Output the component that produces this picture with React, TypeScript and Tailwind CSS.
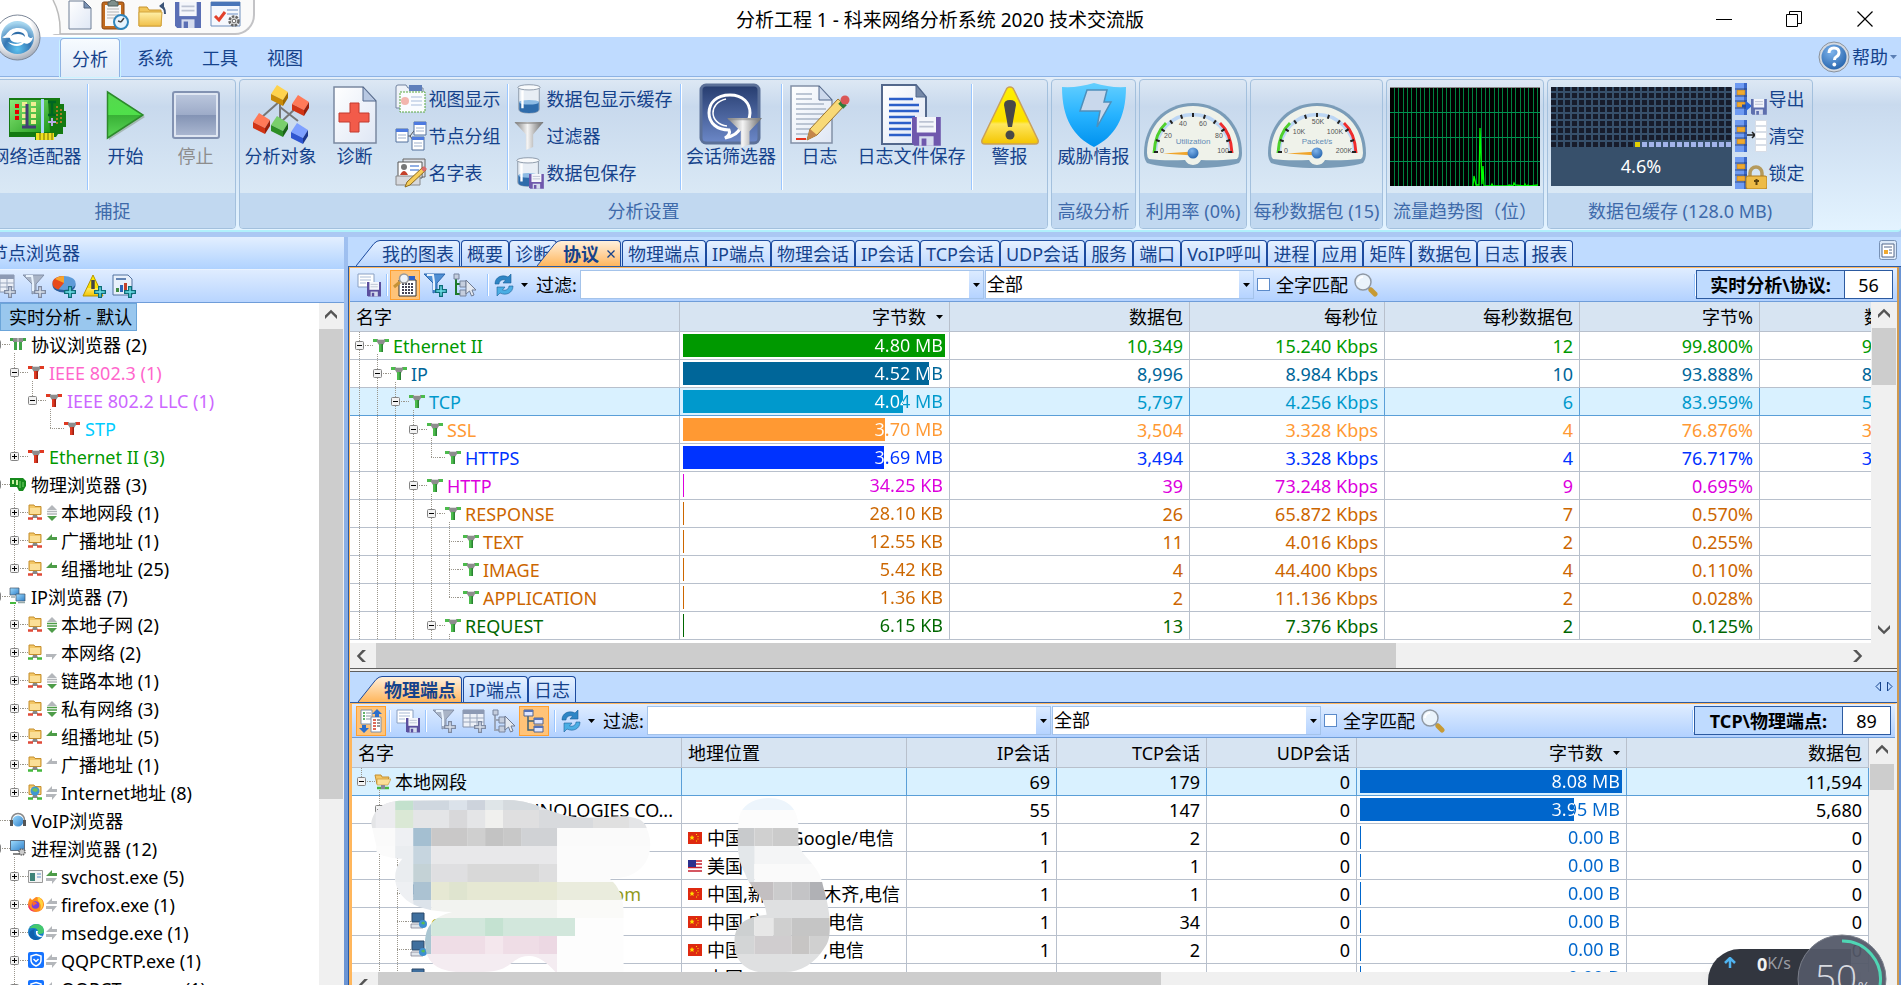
import { createContext, useContext, type CSSProperties, type ReactNode } from "react";

/* ---------- small drawing helpers ---------- */

function Chevron({ dir }: { dir: "up" | "down" | "left" | "right" }) {
  const d = {
    up: "M1 10 7 4l6 6v-3.6L7 .8 1 6.4z",
    down: "M1 4l6 6 6-6v3.6L7 13.2 1 7.6z",
    left: "M10 1 4 7l6 6H6.4L.8 7l5.6-6z",
    right: "M4 1l6 6-6 6h3.6L13.2 7 7.6 1z",
  }[dir];
  return (
    <svg width="14" height="14" viewBox="0 0 14 14" aria-hidden="true">
      <path d={d} fill="#555" />
    </svg>
  );
}

function Caret({ color = "#000" }: { color?: string }) {
  return (
    <svg width="7" height="4" viewBox="0 0 7 4" aria-hidden="true">
      <path d="M0 0h7L3.5 4z" fill={color} />
    </svg>
  );
}

function Defs() {
  return (
    <svg width="0" height="0" className="absolute" aria-hidden="true">
      <defs>
        <linearGradient id="paper" x1="0" y1="0" x2="1" y2="1">
          <stop offset="0" stopColor="#fff" />
          <stop offset="1" stopColor="#dfe7f5" />
        </linearGradient>
        <linearGradient id="funnel" x1="0" x2="1">
          <stop offset="0" stopColor="#7c7c7c" />
          <stop offset=".45" stopColor="#f4f4f4" />
          <stop offset="1" stopColor="#666" />
        </linearGradient>
        <linearGradient id="gold" x1="0" y1="0" x2="0" y2="1">
          <stop offset="0" stopColor="#fff0a8" />
          <stop offset="1" stopColor="#f0c04a" />
        </linearGradient>
        <linearGradient id="warn" x1="0" y1="0" x2="0" y2="1">
          <stop offset="0" stopColor="#fff000" />
          <stop offset=".6" stopColor="#fce000" />
          <stop offset=".65" stopColor="#ffe75e" />
          <stop offset="1" stopColor="#f3c500" />
        </linearGradient>
        <linearGradient id="stopg" x1="0" y1="0" x2="0" y2="1">
          <stop offset="0" stopColor="#b9c5dc" />
          <stop offset=".5" stopColor="#9dabc8" />
          <stop offset=".5" stopColor="#8393b4" />
          <stop offset="1" stopColor="#a9b6d0" />
        </linearGradient>
        <linearGradient id="playg" x1="0" y1="0" x2="0" y2="1">
          <stop offset="0" stopColor="#56d84e" />
          <stop offset=".5" stopColor="#4fe04a" />
          <stop offset=".5" stopColor="#38b035" />
          <stop offset="1" stopColor="#5cd858" />
        </linearGradient>
        <linearGradient id="shield" x1="0" y1="0" x2="0" y2="1">
          <stop offset="0" stopColor="#63cfff" />
          <stop offset=".5" stopColor="#27b3ff" />
          <stop offset="1" stopColor="#0091ee" />
        </linearGradient>
        <linearGradient id="navy" x1="0" y1="0" x2="0" y2="1">
          <stop offset="0" stopColor="#263c6e" />
          <stop offset="1" stopColor="#6c88c8" />
        </linearGradient>
        <linearGradient id="board" x1="0" y1="0" x2="1" y2="1">
          <stop offset="0" stopColor="#8be878" />
          <stop offset="1" stopColor="#1f9a1c" />
        </linearGradient>
        <linearGradient id="screen" x1="0" y1="0" x2="1" y2="1">
          <stop offset="0" stopColor="#9fdcff" />
          <stop offset="1" stopColor="#2f7fc8" />
        </linearGradient>
        <radialGradient id="orb" cx=".5" cy=".85" r=".8">
          <stop offset="0" stopColor="#5ec3f0" />
          <stop offset=".5" stopColor="#3577b4" />
          <stop offset="1" stopColor="#a9d8f0" />
        </radialGradient>
        <radialGradient id="rim" cx=".4" cy=".3" r=".8">
          <stop offset=".5" stopColor="#fff" />
          <stop offset="1" stopColor="#8d97a8" />
        </radialGradient>
        <radialGradient id="ball" cx=".4" cy=".3" r=".8">
          <stop offset="0" stopColor="#7fb4ec" />
          <stop offset="1" stopColor="#1f5ea8" />
        </radialGradient>
      </defs>
    </svg>
  );
}

type IconProps = { w?: number; h?: number; className?: string };

function Svg({ w = 24, h, vb, className, children }: IconProps & { vb: string; children: ReactNode }) {
  return (
    <svg width={w} height={h ?? w} viewBox={vb} className={"shrink-0 " + (className ?? "")} aria-hidden="true">
      {children}
    </svg>
  );
}

const Disk = ({ c = "#5a6fb5", x = 0, y = 0, s = 1 }: { c?: string; x?: number; y?: number; s?: number }) => (
  <g transform={`translate(${x} ${y}) scale(${s})`}>
    <path d="M0 0h24v24H2L0 22z" fill={c} />
    <path d="M4 0h16v13H4z" fill="#f4f6fb" />
    <path d="M6 4h12M6 8h12" stroke="#bcc3d3" strokeWidth="1.5" />
    <path d="M6 16h12v8H6z" fill="#d5dcee" />
    <path d="M8 18h4v6H8z" fill={c} />
  </g>
);

const Plus = ({ x, y, c = "#0d6d78" }: { x: number; y: number; c?: string }) => (
  <g transform={`translate(${x} ${y})`}>
    <path d="M4 0h4v4h4v4H8v4H4V8H0V4h4z" fill={c} />
    <path d="M5.3 1.3h1.4v4h4v1.4h-4v4H5.3v-4h-4V5.3h4z" fill={c === "#0d6d78" ? "#6fe0ea" : "#dde3ec"} />
  </g>
);

const FunnelShape = ({ fill = "url(#funnel)", t }: { fill?: string; t?: string }) => (
  <g transform={t}>
    <path d="M0 0h28L18 12v12l-7 3V12z" fill={fill} />
    <path d="M1 0h26v2H1z" fill="#888" opacity=".6" />
  </g>
);

const Beaker = () => (
  <g>
    <path d="M4 3h22v24q0 4-11 4T4 27z" fill="#e8eef5" stroke="#8b98a8" />
    <path d="M4.5 19h21v8q0 4-10.500 4T4.500 27z" fill="#2f6cab" />
    <ellipse cx="15" cy="19.500" rx="10.500" ry="2.500" fill="#8dbbe4" />
    <ellipse cx="15" cy="3.500" rx="12" ry="2.800" fill="#f8fafc" stroke="#8b98a8" />
    <path d="M8 7v19" stroke="#fff" strokeWidth="2.500" />
  </g>
);

/* ---------- toolbar icons ---------- */

const DocIcon = () => (
  <Svg w={24} h={30} vb="0 0 24 30">
    <path d="M1 1h15l7 7v21H1z" fill="url(#paper)" stroke="#6e7f96" />
    <path d="M16 1v7h7z" fill="#7b93b5" stroke="#53657f" />
  </Svg>
);
const ClipClock = () => (
  <Svg w={28} h={31} vb="0 0 28 31">
    <rect x="1" y="3" width="22" height="27" rx="2" fill="#c06a1e" stroke="#8a4510" />
    <path d="M4 6h16v21H4z" fill="#f8f8f8" />
    <path d="M6 10h12M6 13h12M6 16h12M6 19h8" stroke="#b3b3b3" />
    <path d="M7 3h2q0-2 3-2t3 2h2v4H7z" fill="#7e8f8c" stroke="#4f5f5c" />
    <circle cx="20" cy="23" r="7" fill="#e6f4ff" stroke="#2f86bd" strokeWidth="2" />
    <path d="m20 23 3-4m-3 4-3-1" stroke="#444" strokeWidth="1.500" />
  </Svg>
);
const FolderBack = () => (
  <Svg w={28} h={26} vb="0 0 28 26">
    <path d="M1 5h8l2 3h12v16H1z" fill="#f1c65a" stroke="#c8942e" />
    <path d="M1 10h23l-1 14H1z" fill="url(#gold)" stroke="#d3a43c" />
    <path d="M27 12c0-6-2-8-5-8" fill="none" stroke="#3d5578" strokeWidth="2" />
    <path d="m21 4 5-4v8z" fill="#3d5578" />
  </Svg>
);
const OptionsIcon = () => (
  <Svg w={32} h={27} vb="0 0 32 27">
    <path d="M1 1h29v24H1z" fill="#f5f8fd" stroke="#6f8fbd" />
    <path d="M1 1h29v4H1z" fill="#4a76b8" />
    <path d="m5 15 4 4 6-8" fill="none" stroke="#e2412c" strokeWidth="3" />
    <path d="M17 9h11M17 13h11" stroke="#9ab2d8" strokeWidth="1.500" />
    <circle cx="24" cy="20" r="4.500" fill="#ddd" stroke="#666" strokeWidth="2.500" strokeDasharray="2.500 1.200" />
    <circle cx="24" cy="20" r="1.800" fill="#fff" stroke="#666" />
  </Svg>
);
const SaveIcon = () => (
  <Svg w={24} vb="0 0 24 24">
    <path d="M1 1h16v13H1z" fill="#fff" stroke="#8aa0c2" />
    <path d="M3 4h11M3 7h11M3 10h6" stroke="#a9bbd6" />
    <Disk c="#5b4f9e" x={10} y={9} s={0.6} />
  </Svg>
);
const CalcSearch = () => (
  <Svg w={24} vb="0 0 24 24">
    <path d="M6 7h17v16H6z" fill="#fff" stroke="#333" />
    <path d="M13 3h9v4h-9z" fill="#2f63c8" />
    <path d="M9 11h12M9 14h12M9 17h12M9 20h12" stroke="#445" strokeWidth="1.800" strokeDasharray="2 1" />
    <path d="m7 9-6 5" stroke="#c79235" strokeWidth="3" />
    <circle cx="11" cy="5.500" r="4.500" fill="#edf3fa" stroke="#9a9a9a" strokeWidth="1.500" />
  </Svg>
);
const FunnelPlus = ({ off = false }: { off?: boolean }) => (
  <Svg w={24} vb="0 0 24 24">
    <path d="M1 1h21l-8 9v8l-4 2V10z" fill={off ? "#a9b4c6" : "#4f8fd4"} stroke={off ? "#8390a8" : "#2d68ae"} />
    <path d="M4 2h6l1 7v8" fill="none" stroke="#e8f2fc" strokeWidth="2" />
    <Plus x={12} y={12} c={off ? "#7f8ba3" : "#0d6d78"} />
  </Svg>
);
const TreeCursor = ({ off = false }: { off?: boolean }) => (
  <Svg w={24} vb="0 0 24 24">
    <path d="M3 4v17h5M3 11h5" fill="none" stroke={off ? "#9aa5b8" : "#1d7a2a"} strokeWidth="2" />
    <path d="M1 1h5v5H1zM7 8h6v6H7zM7 17h6v6H7z" fill="#c5cede" stroke="#78859e" />
    <path d="M13 7v14l3.500-3 2 5 2.500-1-2-5h4z" fill="#e4e9f1" stroke="#6f7b92" />
  </Svg>
);
const TablePlus = ({ off = true }: { off?: boolean }) => (
  <Svg w={24} vb="0 0 24 24">
    <path d="M1 1h21v17H1z" fill="#edf1f8" stroke="#8592ab" />
    <path d="M1 1h21v4H1z" fill="#8d9ab4" />
    <path d="M1 9h21M1 13h21M8 5v13M15 5v13" stroke="#9aa7bd" />
    <Plus x={12} y={12} c={off ? "#7f8ba3" : "#0d6d78"} />
  </Svg>
);
const TreeBoxes = () => (
  <Svg w={22} h={24} vb="0 0 22 24">
    <path d="M5 7v14h6M5 12h6" fill="none" stroke="#3f6277" strokeWidth="1.500" />
    <path d="M1 1h9v6H1zM11 9h9v6h-9zM11 17h9v6h-9z" fill="#dfe6ff" stroke="#52658c" />
    <path d="M1 1h9v2H1zM11 9h9v2h-9zM11 17h9v2h-9z" fill="#5673b8" />
  </Svg>
);
const LinkDoc = () => (
  <Svg w={24} vb="0 0 24 24">
    <path d="M2 1h11v14H2z" fill="#fff" stroke="#7d8fa8" />
    <path d="M4 4h2M4 7h2M4 10h2" stroke="#2f9a3b" strokeWidth="1.500" />
    <path d="M7 4h5M7 7h5M7 10h5" stroke="#8b97a8" strokeWidth="1.200" />
    <path d="M12 8h10v15H12z" fill="#fff" stroke="#7d8fa8" />
    <path d="M14 11h3M14 14h3M14 17h3M14 20h3" stroke="#d23b25" strokeWidth="1.500" />
    <path d="M18 11h3M18 14h3M18 17h3" stroke="#333" />
    <path d="M18 0l5 5h-3v3h-4V5h-3zM5 24l-5-5h3v-3h4v3h3z" fill="#2d6fcb" />
  </Svg>
);
const Refresh = () => (
  <Svg w={20} h={22} vb="0 0 20 22">
    <path d="M1 10C1 3 8 0 14 3l3-3v9H9l2.500-3C8 5 5 7 5 10z" fill="#2e86c6" stroke="#1b5f98" strokeWidth=".6" />
    <path d="M19 12c0 7-7 10-13 7l-3 3v-9h8l-2.500 3c3.500 1 6.500-1 6.500-4z" fill="#4aaee4" stroke="#1b5f98" strokeWidth=".6" />
  </Svg>
);
const Magnifier = () => (
  <Svg w={24} vb="0 0 24 24">
    <path d="m14 14 4 4" stroke="#8f98a3" strokeWidth="3" />
    <path d="m17 17 4 4" stroke="#c79a34" strokeWidth="5" strokeLinecap="round" />
    <circle cx="9" cy="9" r="8" fill="#eaf3fb" stroke="#8f98a3" strokeWidth="1.500" />
    <path d="M4 9a5 5 0 0 1 5-5" fill="none" stroke="#fff" strokeWidth="2" />
  </Svg>
);
const PiePlus = () => (
  <Svg w={24} vb="0 0 24 24">
    <ellipse cx="12" cy="11" rx="11.500" ry="7.500" fill="#2a5f9e" />
    <ellipse cx="12" cy="9" rx="11.500" ry="7" fill="#5e9bd8" />
    <path d="M12 9V2C5 2 .5 5 .5 9s3 6 6 6.500z" fill="#e84a1c" />
    <path d="M12 9V2c-4 0-7 1-9 3z" fill="#f7a32b" />
    <Plus x={12} y={12} />
  </Svg>
);
const WarnPlus = () => (
  <Svg w={24} vb="0 0 24 24">
    <path d="M11 1 1 22h20z" fill="url(#warn)" stroke="#b79300" strokeLinejoin="round" />
    <path d="M11 6v9" stroke="#444" strokeWidth="3.500" />
    <Plus x={12} y={12} />
  </Svg>
);
const ReportPlus = () => (
  <Svg w={24} vb="0 0 24 24">
    <path d="M1 1h15l4 4v16H1z" fill="#e8f0fb" stroke="#53729e" />
    <path d="M4 5h10" stroke="#6384b3" strokeWidth="2" />
    <path d="M4 14h3v4H4z" fill="#3f8a45" />
    <path d="M8 11h3v7H8z" fill="#2d65b8" />
    <path d="M12 9h3v9h-3z" fill="#c5412a" />
    <Plus x={12} y={12} />
  </Svg>
);

/* ---------- ribbon icons ---------- */

const Adapter = () => (
  <Svg w={58} h={44} vb="0 0 58 44" className="mt-2">
    <path d="M1 1h51v6h4v7h2v16h-3v7h-5l-2 3H30v3H27v-3H1z" fill="#147a12" />
    <path d="M2 3h38l2 32H2z" fill="url(#board)" />
    <path d="M33 2h3v34h-3z" fill="#a9d6f5" />
    <path d="M7 7h4v4H7zM7 13h4v4H7zM7 19h4v4H7z" fill="#e50000" />
    <path d="M14 7h14M14 13h14M14 19h14M14 25h14" stroke="#f0ee94" strokeWidth="4" strokeDasharray="5 4" />
    <path d="M19 7v24M14 30h14" stroke="#444075" strokeWidth="3" />
    <path d="M40 5h8M44 5v13M40 18h8" stroke="#062" strokeWidth="2.500" />
    <path d="M40 25h8M44 21v8" stroke="#b9ade8" strokeWidth="2" />
    <path d="M49 9v18M53 12v14" stroke="#a87f25" strokeWidth="2" strokeDasharray="2 2" />
    <path d="M28 36h18v7H28z" fill="#f0e120" />
    <path d="M32 36v7M36 36v7M40 36v7M44 36v7" stroke="#756b08" />
  </Svg>
);
const Play = () => (
  <Svg w={40} h={50} vb="0 0 40 50">
    <path d="M3 3v47l36-23z" fill="#8aa08e" opacity=".6" />
    <path d="M1.500 2v46L37 25z" fill="url(#playg)" stroke="#2d8a2c" strokeWidth="1.500" />
  </Svg>
);
const Stop = () => (
  <Svg w={48} vb="0 0 48 48">
    <rect x="1" y="1" width="46" height="46" rx="2" fill="#dfe6f2" stroke="#8292b2" strokeWidth="2" />
    <rect x="4" y="4" width="40" height="40" fill="url(#stopg)" />
  </Svg>
);
const Cube = ({ x, y, a, b, c }: { x: number; y: number; a: string; b: string; c: string }) => (
  <g transform={`translate(${x} ${y})`}>
    <path d="M6 0 17 7l-5 8L0 9z" fill={a} />
    <path d="M0 9l12 6v6L0 15z" fill={b} />
    <path d="M17 7v6l-5 8v-6z" fill={c} />
  </g>
);
const Objects = () => (
  <Svg w={60} vb="0 0 60 60">
    <path d="m29 16-18 16m18-16 0 18m0-12 18 14M46 22 29 38" stroke="#777" strokeWidth="2" />
    <Cube x={20} y={0} a="#ffd34d" b="#c98b08" c="#a06b00" />
    <Cube x={41} y={10} a="#ff7a58" b="#d13415" c="#99200b" />
    <Cube x={2} y={28} a="#ff7a58" b="#d13415" c="#99200b" />
    <Cube x={20} y={31} a="#79cf6c" b="#2c8e26" c="#1b6418" />
    <Cube x={40} y={38} a="#7ea0ff" b="#2f55d0" c="#1c378e" />
  </Svg>
);
const Diagnose = () => (
  <Svg w={44} h={58} vb="0 0 44 58">
    <path d="M1 1h29l13 14v42H1z" fill="url(#paper)" stroke="#7a88a0" strokeWidth="1.500" />
    <path d="M30 1v14h13z" fill="#b8c8e2" stroke="#53688c" />
    <path d="M17 17h9v10h10v9H26v10h-9V36H6v-9h11z" fill="#f25b4a" stroke="#c23a2e" />
  </Svg>
);
const ViewShow = () => (
  <Svg w={32} h={30} vb="0 0 32 30">
    <path d="M1 3q0-2 2-2h8l2 3h15v20H1z" fill="#eef2f8" stroke="#72839f" />
    <path d="M14 1h13v6H14z" fill="#5f7fbb" />
    <path d="M5 8h25v20H5z" fill="#fafcff" stroke="#5aa83f" strokeDasharray="2 1" />
    <circle cx="10" cy="17" r="4" fill="#f3b6ae" />
    <path d="M16 13h11M16 17h11M16 21h11" stroke="#c4d1e8" strokeWidth="1.500" />
  </Svg>
);
const NodeGroup = () => (
  <Svg w={32} h={30} vb="0 0 32 30">
    <path d="M12 15h3L22 6M15 15l6 8" fill="none" stroke="#555" />
    {[[1, 8], [19, 1], [17, 16]].map(([x, y]) => (
      <g key={x} transform={`translate(${x} ${y})`}>
        <path d="M0 0h12v13H0z" fill="#fff" stroke="#53709c" />
        <path d="M0 0h12v3H0z" fill="#4d7ae0" />
        <path d="M2 6h8M2 9h8" stroke="#9db0cc" />
      </g>
    ))}
  </Svg>
);
const NameTable = () => (
  <Svg w={32} h={30} vb="0 0 32 30">
    <path d="M8 1h22v18H8z" fill="#dcdfe5" stroke="#666" />
    <path d="M3 4h24v16H3z" fill="#fff" stroke="#555" />
    <circle cx="9" cy="9" r="3" fill="#777" />
    <path d="M5 17q4-8 8 0z" fill="#c5412a" />
    <path d="M15 8h9M15 12h9" stroke="#6e95dd" strokeWidth="1.500" />
    <path d="M1 18h24v9H1z" fill="#d7d9dd" stroke="#888" />
    <path d="m28 9 3 3-16 15-5 2 2-5z" fill="#f6cd5a" stroke="#8c6a1d" />
    <path d="m26 11 3-3 3 3-3 3z" fill="#dc6a6a" />
  </Svg>
);
const SessionFilter = () => (
  <Svg w={64} vb="0 0 64 64">
    <rect x="2" y="2" width="58" height="58" rx="5" fill="url(#navy)" stroke="#5b7098" strokeWidth="3" />
    <path d="M31 12C17 12 10 20 10 30s8 17 20 17q2 4-4 8 13-3 15-10c6-3 10-8 10-15 0-10-7-18-20-18z" fill="none" stroke="#fff" strokeWidth="3" />
    <path d="M27 16c-9 2-13 8-13 14s5 12 14 13" fill="none" stroke="#fff" strokeWidth="1.500" />
    <FunnelShape t="translate(28 35) scale(1.250 1.100)" />
  </Svg>
);
const LogIcon = () => (
  <Svg w={60} vb="0 0 60 60">
    <path d="M1 1h28l13 14v43H1z" fill="url(#paper)" stroke="#8290a6" strokeWidth="1.500" />
    <path d="M29 1v14h13z" fill="#cdd9ec" stroke="#53688c" />
    <path d="M6 9h16M6 14h16M6 19h28M6 24h30M6 29h28M6 34h26M6 39h24M6 44h18M6 49h12" stroke="#a9b5c6" strokeWidth="1.500" />
    <path d="M6 54h10" stroke="#e53620" strokeWidth="2" />
    <path d="m48 14 7 6-28 30-10 5 3-11z" fill="#f8d977" stroke="#9c7430" />
    <path d="m17 55 3-11 7 6z" fill="#c4864a" />
    <path d="m50 17 5 5" stroke="#2e7d3c" strokeWidth="5" />
    <circle cx="55" cy="15" r="4.500" fill="#da5757" />
  </Svg>
);
const LogSave = () => (
  <Svg w={62} vb="0 0 62 62">
    <path d="M1 1h34l10 12v47H1z" fill="url(#paper)" stroke="#53688c" strokeWidth="2" />
    <path d="M35 1v12h10z" fill="#7689a8" stroke="#53688c" />
    <path d="M8 15h24M8 21h30M8 27h30M8 33h26M8 39h22M8 45h22M8 51h22" stroke="#2c5fc9" strokeWidth="2.500" />
    <Disk c="#6f58ad" x={31} y={33} s={1.2} />
  </Svg>
);
const Warning = () => (
  <Svg w={60} vb="0 0 60 60">
    <path d="M30 2q3 0 4 3l24 50q1 4-3 4H5q-4 0-3-4L26 5q1-3 4-3z" fill="url(#warn)" stroke="#c9a05a" strokeWidth="1.500" />
    <path d="M24 20q0-5 6-5t6 5l-4 22h-4z" fill="#484848" />
    <circle cx="30" cy="50" r="4.500" fill="#484848" />
  </Svg>
);
const ShieldIcon = () => (
  <Svg w={64} vb="0 0 64 64">
    <path d="M32 0Q48 5 64 4c0 32-12 50-32 60C12 54 0 36 0 4q16 1 32-4z" fill="url(#shield)" />
    <path d="M25 7h20l-3 12h7L35 44l3-16H18z" fill="#c9d8ec" stroke="#4f8fba" strokeWidth="1.500" />
  </Svg>
);

function Gauge({ label, marks }: { label: string; marks: { t: string; x: number; y: number }[] }) {
  const ticks = Array.from({ length: 11 }, (_, i) => Math.PI - (i * Math.PI) / 10);
  return (
    <Svg w={98} h={66} vb="0 0 98 66">
      <path d="M3 60Q0 56 0 50C0 22 20 0 49 0s49 22 49 50q0 6-3 10-16 5-46 5T3 60z" fill="#7a9cb8" />
      <path d="M5 56Q3 54 3 50C3 24 22 3 49 3s46 21 46 47q0 4-2 6-22 2-36 1a9 9 0 0 1-16 0q-22 1-36-1z" fill="#eff2ea" />
      <path d="M11.500 49A37.500 37.500 0 0 1 86.500 49" fill="none" stroke="#bcd6f4" strokeWidth="3.500" />
      <path d="M10 50Q11 30 22 20" fill="none" stroke="#4fd02c" strokeWidth="3" />
      <path d="M88 50Q87 30 76 20" fill="none" stroke="#f02c2c" strokeWidth="3" />
      {ticks.map((a) => (
        <path
          key={a}
          d={`M${49 + 35 * Math.cos(a)} ${49 - 35 * Math.sin(a)}L${49 + 39 * Math.cos(a)} ${49 - 39 * Math.sin(a)}`}
          stroke="#222"
          strokeWidth="2"
        />
      ))}
      {marks.map((m) => (
        <text key={m.t} x={m.x} y={m.y} fontSize="7" fill="#555" textAnchor="middle" fontFamily="Liberation Sans">
          {m.t}
        </text>
      ))}
      <text x="49" y="41" fontSize="8" fill="#5f8bb5" textAnchor="middle" fontFamily="Liberation Sans">
        {label}
      </text>
      <path d="M19 50.500 49 48.500v4z" fill="#f0a52c" />
      <circle cx="49" cy="50" r="5.500" fill="url(#ball)" />
    </Svg>
  );
}

function Traffic() {
  return (
    <Svg w={150} h={99} vb="0 0 150 99">
      <path d="M0 0h150v99H0z" fill="#000" />
      {Array.from({ length: 34 }, (_, i) => (
        <rect key={i} x={Math.round(4 + i * 4.33)} y="0" width="1" height="99" fill="#00803e" />
      ))}
      <path d="M0 25.500h150M0 50.500h150M0 74.500h150" stroke="#009050" />
      <path d="M0 .5h150" stroke="#888" />
      <path
        d="M83 99l1-10 2 9h3l1-57 2 56 1-18 1 20h7l1-2 1 2h15l1-1 4 1 1-3 1 2 9 1 1-2 1 2 2-1 1 1 9-1"
        fill="none"
        stroke="#00ff00"
        strokeWidth="1.300"
      />
    </Svg>
  );
}

function Buffer() {
  return (
    <Svg w={181} h={99} vb="0 0 181 99">
      <path d="M0 0h181v99H0z" fill="#37506b" />
      {Array.from({ length: 234 }, (_, i) => {
        const col = i % 26;
        const row = Math.floor(i / 26);
        const used = row === 8 && col > 12;
        const fill = row === 8 && col === 12 ? "#e3cf00" : used ? "#a3b4ea" : "#171c2b";
        return <rect key={i} x={col * 7} y={row * 7 - 1} width="5" height="5" fill={fill} />;
      })}
      <text x="90" y="86" fontSize="18" fill="#fff" textAnchor="middle" fontFamily="Noto Sans">
        4.6%
      </text>
    </Svg>
  );
}

const Strip = () => (
  <g>
    <path d="M0 0h12v32H0z" fill="#3c69c8" />
    <path d="M0 0h9v32H0z" fill="#6f9bf2" />
    <path d="M2 7h8v5H2zM2 19h8v5H2z" fill="#f0a92f" stroke="#a67420" strokeWidth=".5" />
    <path d="M0 6h12M0 13h12M0 18h12M0 25h12" stroke="#233a70" strokeWidth=".8" />
  </g>
);
const ExportIcon = () => (
  <Svg w={32} vb="0 0 32 32">
    <Strip />
    <path d="M7 23h5" stroke="#1d4dae" strokeWidth="3" />
    <path d="m11 18 6 5-6 5z" fill="#2b67d8" />
    <Disk c="#5d6fae" x={16} y={16} s={0.66} />
  </Svg>
);
const ClearIcon = () => (
  <Svg w={32} vb="0 0 32 32">
    <Strip />
    <path d="M12 15h8M17 12l3 3-3 3" fill="none" stroke="#222" strokeWidth="1.500" />
    <path d="M20.500.5h11v31h-11z" fill="#fff" stroke="#d8dde6" />
    <path d="M21 6h10M21 12h10M21 19h10M21 25h10" stroke="#ccd3df" strokeWidth="1.500" />
  </Svg>
);
const LockIcon = () => (
  <Svg w={32} vb="0 0 32 32">
    <Strip />
    <path d="M15 20v-4a6 6 0 0 1 12 0v4" fill="none" stroke="#b59a5c" strokeWidth="3.500" />
    <rect x="11" y="19" width="21" height="13" rx="2" fill="#edbb47" stroke="#b07d1c" />
    <path d="M21.500 22v6M19 24h5" stroke="#5d430e" strokeWidth="2" />
  </Svg>
);

/* ---------- tree ---------- */

/*
 * Guide codes, one letter for each 18px column:
 *   e / E  open expander (E: last child)    + / *  closed expander (*: last child)
 *   T / L  branch to a leaf (L: last child)     |  line that passes through
 */
function GuideCell({ kind }: { kind: string }) {
  const dash = { stroke: "#9a968c", strokeDasharray: "1 1" };
  const box = "eE+*".includes(kind);
  return (
    <svg width="18" height="28" viewBox="0 0 18 28" className="block shrink-0" aria-hidden="true">
      {"|Te+".includes(kind) && <path d="M9.500 0V28" {...dash} />}
      {"LE*".includes(kind) && <path d="M9.500 0V14" {...dash} />}
      {kind !== "|" && kind !== " " && <path d="M9 13.500h9" {...dash} />}
      {box && (
        <>
          <rect x="5.500" y="9.500" width="8" height="8" rx="1" fill="#f3f3f3" stroke="#848484" />
          <path d={"+*".includes(kind) ? "M7 13.500h5M9.500 11v5" : "M7 13.500h5"} stroke="#000" />
        </>
      )}
    </svg>
  );
}

function Guides({ g }: { g: string }) {
  return (
    <>
      {g.split("").map((k, i) => (
        <GuideCell key={i} kind={k} />
      ))}
    </>
  );
}

function TreeIcon({ kind, kids }: { kind: string; kids?: boolean }) {
  return (
    <svg width="21" height="28" viewBox="0 0 21 28" className="block shrink-0" aria-hidden="true">
      <path d="M0 13.500h5" stroke="#9a968c" strokeDasharray="1 1" />
      {kids && <path d="M9.500 22v6" stroke="#9a968c" strokeDasharray="1 1" />}
      <g transform="translate(5 5)">{ICONS[kind]}</g>
    </svg>
  );
}

const tee = (c: string, d: string) => (
  <g>
    <path d="M0 2h5v3H0zM10 2h6v3h-6z" fill={c} />
    <path d="M4 2h8v3l-2 3H6L4 5z" fill="#8d8d8d" />
    <path d="M6 7h4v8H6z" fill={c} />
    <path d="M8.500 7H10v8H8.500z" fill={d} />
    <path d="M5 2.500h6" stroke="#ddd" />
  </g>
);
const folder = (c: string) => (
  <g>
    <path d="M1 1h5l1 1.500h6v8H1z" fill="#f3c766" stroke="#c58f2e" />
    <path d="M2 4h10v6H2z" fill="#fbdf97" />
    <path d="M5 11h4l1 3H4z" fill="#888" />
    <path d="M0 14.500h5M9 14.500h5" stroke={c} strokeWidth="2.500" />
  </g>
);
const tencent = (
  <g>
    <rect width="16" height="16" rx="2" fill="#1673ff" />
    <path d="M8 2.500 13 4v4q0 4-5 6-5-2-5-6V4z" fill="none" stroke="#fff" strokeWidth="1.500" />
    <path d="m5.500 7 2.500 2.500L10.500 7" fill="none" stroke="#fff" strokeWidth="1.500" />
  </g>
);
const ICONS: Record<string, ReactNode> = {
  root: <circle cx="4" cy="8" r="8" fill="url(#ball)" />,
  tees: (
    <g>
      <path d="M0 2h4v3H0zM12 2h4v3h-4zM4 6h3v8H4zM9 6h3v8H9z" fill="#3fa447" />
      <path d="M3 2h10v4H3z" fill="#8d8d8d" />
      <path d="M8 2v4" stroke="#ddd" />
    </g>
  ),
  red: tee("#e03a22", "#9c1f10"),
  green: tee("#4cbb4c", "#2a8332"),
  nic: (
    <g>
      <path d="M0 2h13l3 3v5l-3 5H9l-2-4H0z" fill="#178a1c" />
      <path d="M2 4h2v4H2zM6 4h2v5H6z" fill="#c9f0a0" />
      <path d="M10 5v7M13 6v5" stroke="#7bd86c" />
    </g>
  ),
  folderR: folder("#e04a38"),
  folderG: folder("#46b83e"),
  net: (
    <g>
      <path d="M0 0h9v7H0z" fill="url(#screen)" stroke="#456" strokeWidth=".7" />
      <path d="M6 6h9v7H6z" fill="url(#screen)" stroke="#456" strokeWidth=".7" />
      <path d="M8 14.500h7M1 9h4" stroke="#9aa" strokeWidth="1.500" />
      <path d="M0 15h6" stroke="#46b83e" strokeWidth="2" />
    </g>
  ),
  globe: (
    <g>
      {folder("#46b83e")}
      <circle cx="7" cy="7" r="4.500" fill="#3f97d2" />
      <path d="M4 6q3-4 6 0-2 4-6 0z" fill="#6cc35c" />
    </g>
  ),
  voip: (
    <g>
      <circle cx="8" cy="9" r="5.500" fill="url(#screen)" />
      <path d="M1.500 11V8a6.500 6.500 0 0 1 13 0v3" fill="none" stroke="#888" strokeWidth="1.500" />
      <path d="M0 8h3v6H0zM13 8h3v6h-3z" fill="#555" />
    </g>
  ),
  proc: (
    <g>
      <path d="M.5.5h14v10H.5z" fill="url(#screen)" stroke="#5d6d80" />
      <path d="M3 14h8" stroke="#888" strokeWidth="2" />
      <circle cx="12" cy="12" r="3" fill="#ccc" stroke="#666" strokeWidth="1.500" strokeDasharray="1.500 .8" />
    </g>
  ),
  exe: (
    <g>
      <path d="M.5 2.500h14v12H.5z" fill="#f4f4f4" stroke="#999" />
      <path d="M2 5h5v8H2z" fill="#3e8378" />
      <path d="M9 6h4M9 9h4" stroke="#5f8fc4" />
    </g>
  ),
  fox: (
    <g>
      <path d="M8 1c5 0 8 3 8 7.500S12 16 8 16 0 13 0 8.500C0 6 1 4 2 2l2 2z" fill="#ff8a1e" />
      <path d="M11 1q4 3 4 7t-3 6q2-5-1-8t0-5z" fill="#ffd23e" />
      <path d="M1 7q0 7 7 8.500Q2 16 .3 11z" fill="#f0326b" />
      <circle cx="7.500" cy="9" r="3.800" fill="#7a3fe0" />
      <path d="M4 6q4-1 5 2-3 0-3 2-2-1-2-4z" fill="#ff6a2a" />
    </g>
  ),
  edge: (
    <g>
      <circle cx="8" cy="8" r="8" fill="#1479c9" />
      <path d="M1 5q3-5 8-5 7 1 7 7 0 3-4 3-3 0-2-2 0-4-5-4-3 0-4 1z" fill="#44c86e" />
      <path d="M6 8q0 6 7 6-8 5-12-3 0-5 6-6-1 1-1 3z" fill="#1060ad" />
      <path d="M8 7q-1 5 4 6 2 0 3-1-3 0-5-2-1-1 0-3z" fill="#fff" />
    </g>
  ),
  qq: tencent,
  host: (
    <g>
      <path d="M1 0h12v9H1z" fill="#3f6f9e" stroke="#2a4868" />
      <path d="M0 11h12v4H0z" fill="#dfe4ea" stroke="#778" strokeWidth=".7" />
      <circle cx="12" cy="11" r="4" fill="#3d8fd0" />
      <path d="M10 10q3-3 4 0-1 3-4 0z" fill="#55bb55" />
    </g>
  ),
  localnet: (
    <g>
      <path d="M0 2h6l1 2h7l-2 7H2z" fill="#f3c766" stroke="#c58f2e" />
      <path d="M2 6h14l-3 6H2z" fill="#fbdf97" stroke="#c58f2e" strokeWidth=".6" />
      <path d="M2 15h12" stroke="#46b83e" strokeWidth="2.500" />
      <path d="M6 12h4v4H6z" fill="#889" />
    </g>
  ),
};

function Arrows({ k }: { k: string }) {
  const [up, mid, down] = k.split("").map((c) => (c === "g" ? "#4d9c48" : c === "s" ? "#b4b7bb" : "none"));
  const tall = mid !== "none";
  return (
    <svg width="12" height="16" viewBox="0 0 12 16" className="block shrink-0" aria-hidden="true">
      <path d={tall ? "M1 5 6 0l5 5z" : "M0 7 6 1v3h5v3z"} fill={up} />
      <path d="M1 6.500h10M1 9h10" stroke={mid} strokeWidth="1.600" />
      <path d={tall ? "M1 11h10L6 16z" : "M0 9h11L6 15v-3H0z"} fill={down} />
    </svg>
  );
}

type Node = { g: string; icon: string; text: string; color?: string; arrows?: string; kids?: boolean; sel?: boolean };

const NODES: Node[] = [
  { g: "", icon: "root", text: "实时分析 - 默认", sel: true },
  { g: "e", icon: "tees", text: "协议浏览器 (2)", kids: true },
  { g: " e", icon: "red", text: "IEEE 802.3 (1)", color: "#ff66cc", kids: true },
  { g: " |E", icon: "red", text: "IEEE 802.2 LLC (1)", color: "#cc66ff", kids: true },
  { g: " | L", icon: "red", text: "STP", color: "#00ccff" },
  { g: " *", icon: "red", text: "Ethernet II (3)", color: "#009900" },
  { g: "e", icon: "nic", text: "物理浏览器 (3)", kids: true },
  { g: " +", icon: "folderR", text: "本地网段 (1)", arrows: "ssg" },
  { g: " +", icon: "folderR", text: "广播地址 (1)", arrows: "gxx" },
  { g: " *", icon: "folderR", text: "组播地址 (25)", arrows: "gxx" },
  { g: "e", icon: "net", text: "IP浏览器 (7)", kids: true },
  { g: " +", icon: "folderR", text: "本地子网 (2)", arrows: "sgg" },
  { g: " +", icon: "folderG", text: "本网络 (2)", arrows: "xxs" },
  { g: " +", icon: "folderR", text: "链路本地 (1)", arrows: "ssg" },
  { g: " +", icon: "folderR", text: "私有网络 (3)", arrows: "sgg" },
  { g: " +", icon: "folderR", text: "组播地址 (5)", arrows: "gxx" },
  { g: " +", icon: "folderG", text: "广播地址 (1)", arrows: "sxx" },
  { g: " *", icon: "globe", text: "Internet地址 (8)", arrows: "sxs" },
  { g: "T", icon: "voip", text: "VoIP浏览器" },
  { g: "e", icon: "proc", text: "进程浏览器 (12)", kids: true },
  { g: " +", icon: "exe", text: "svchost.exe (5)", arrows: "gxs" },
  { g: " +", icon: "fox", text: "firefox.exe (1)", arrows: "sxs" },
  { g: " +", icon: "edge", text: "msedge.exe (1)", arrows: "sxs" },
  { g: " +", icon: "qq", text: "QQPCRTP.exe (1)", arrows: "sxs" },
  { g: " +", icon: "qq", text: "QQPCTray.exe (1)", arrows: "sxs" },
];

function Sidebar() {
  return (
    <aside className="flex w-[344px] shrink-0 flex-col">
      <h2 className="flex h-8 shrink-0 items-center bg-linear-to-b from-[#e3efff] to-[#afd2ff] text-[#15428b]">
        <span className="-ml-2.5">节点浏览器</span>
      </h2>
      <div className="flex h-[34px] shrink-0 items-center gap-1.5 overflow-hidden border-t border-b border-t-[#eaf3ff] border-b-[#6f9dd9] bg-linear-to-b from-[#dfecff] to-[#b8d5ff]">
        <button type="button" aria-label="添加表" className="-ml-2"><TablePlus /></button>
        <button type="button" aria-label="添加过滤器"><FunnelPlus off /></button>
        <button type="button" aria-label="添加图表"><PiePlus /></button>
        <button type="button" aria-label="添加警报"><WarnPlus /></button>
        <button type="button" aria-label="添加报表"><ReportPlus /></button>
      </div>
      <div className="flex min-h-0 flex-1 bg-white">
        <ul className="min-w-0 flex-1 overflow-hidden">
          {NODES.map((n, i) => (
            <li key={i} className="flex h-7">
              <div className={n.sel ? "flex items-center border border-[#6ba5d9] bg-[#99c7ee] pr-1" : "flex items-center"}>
                <span className={n.sel ? "-ml-5 flex" : "-ml-[13px] flex"}>
                  <Guides g={n.g} />
                  <TreeIcon kind={n.icon} kids={n.kids} />
                </span>
                {n.arrows && (
                  <span className="ml-0.5">
                    <Arrows k={n.arrows} />
                  </span>
                )}
                <span
                  className={n.sel ? "ml-[7px] whitespace-nowrap" : n.arrows ? "ml-[3px] whitespace-nowrap" : "ml-[5px] whitespace-nowrap"}
                  style={{ color: n.color }}
                >
                  {n.text}
                </span>
              </div>
            </li>
          ))}
        </ul>
        <div className="flex w-[25px] shrink-0 flex-col bg-[#f0f0f0] pr-px">
          <div className="flex h-[26px] items-center justify-center">
            <Chevron dir="up" />
          </div>
          <div className="h-[470px] bg-[#cdcdcd]" />
        </div>
      </div>
    </aside>
  );
}

/* ---------- ribbon ---------- */

function Big({ icon, label, className, off }: { icon: ReactNode; label: string; className: string; off?: boolean }) {
  return (
    <button
      type="button"
      disabled={off}
      className={"flex shrink-0 flex-col items-center whitespace-nowrap " + (off ? "text-[#8d8d8d] " : "text-[#15428b] ") + className}
    >
      <span className="mt-1 flex h-[62px] items-center justify-center">{icon}</span>
      <span className="flex h-5 items-center justify-center leading-5">{label}</span>
    </button>
  );
}

function Small({ icon, label }: { icon: ReactNode; label: string }) {
  return (
    <button type="button" className="flex h-[37px] items-center gap-0.5 whitespace-nowrap text-[#15428b]">
      <span className="flex w-8 justify-center">{icon}</span>
      {label}
    </button>
  );
}

const Sep = () => <span className="mt-1 h-[106px] w-0.5 shrink-0 border-l border-[#9ac6ff] bg-white" />;

function Group({ label, className, children }: { label: string; className: string; children: ReactNode }) {
  return (
    <section className={"flex shrink-0 flex-col overflow-hidden rounded border border-[#a3c0dd] bg-linear-to-b from-[#dde8f4] from-0% via-[#c8d9ed] via-18% to-[#d9e8f5] to-75% " + className}>
      <div className="flex h-[113px] shrink-0 justify-center">{children}</div>
      <div className="flex flex-1 items-center justify-center bg-[#c1d8f0] whitespace-nowrap text-[#3e6aaa]">{label}</div>
    </section>
  );
}

function Ribbon() {
  return (
    <div className="flex h-[156px] shrink-0 gap-[3px] rounded-r border-t border-b-2 border-t-[#8db2e3] border-b-[#b0f0fb] bg-linear-to-b from-[#e4eef9] via-[#c9daee] via-18% to-[#e3f3ff] pt-0.5 pb-px">
      <Group label="捕捉" className="-ml-3 w-[248px] pl-px">
        <span className="w-2.5" />
        <Big icon={<Adapter />} label="网络适配器" className="w-[72px]" />
        <span className="w-3.5" />
        <Sep />
        <span className="w-1.5" />
        <Big icon={<Play />} label="开始" className="w-[62px]" />
        <span className="w-2" />
        <Big icon={<Stop />} label="停止" className="w-[62px]" off />
        <span className="w-2" />
      </Group>
      <Group label="分析设置" className="w-[809px]">
        <Big icon={<Objects />} label="分析对象" className="w-20" />
        <Big icon={<Diagnose />} label="诊断" className="w-[68px]" />
        <div className="flex w-[118px] flex-col pl-1.5">
          <Small icon={<ViewShow />} label="视图显示" />
          <Small icon={<NodeGroup />} label="节点分组" />
          <Small icon={<NameTable />} label="名字表" />
        </div>
        <Sep />
        <div className="flex w-[171px] flex-col pl-1">
          <Small icon={<Svg w={28} h={32} vb="0 0 30 32"><Beaker /></Svg>} label="数据包显示缓存" />
          <Small icon={<Svg w={30} h={28} vb="0 0 28 27"><FunnelShape /></Svg>} label="过滤器" />
          <Small icon={<Svg w={30} h={32} vb="0 0 32 34"><Beaker /><Disk c="#6f58ad" x={16} y={18} s={0.66} /></Svg>} label="数据包保存" />
        </div>
        <Sep />
        <Big icon={<SessionFilter />} label="会话筛选器" className="w-[99px]" />
        <Sep />
        <Big icon={<LogIcon />} label="日志" className="w-[74px]" />
        <Big icon={<LogSave />} label="日志文件保存" className="w-[110px]" />
        <span className="w-1" />
        <Sep />
        <Big icon={<Warning />} label="警报" className="w-[74px]" />
      </Group>
      <Group label="高级分析" className="w-[85px]">
        <Big icon={<ShieldIcon />} label="威胁情报" className="w-20" />
      </Group>
      <Group label="利用率 (0%)" className="w-[108px]">
        <span className="pt-[23px]">
          <Gauge
            label="Utilization"
            marks={[
              { t: "0", x: 18, y: 50 },
              { t: "20", x: 24, y: 35 },
              { t: "40", x: 39, y: 23 },
              { t: "60", x: 59, y: 23 },
              { t: "80", x: 75, y: 35 },
              { t: "100", x: 79, y: 50 },
            ]}
          />
        </span>
      </Group>
      <Group label="每秒数据包 (15)" className="w-[133px]">
        <span className="pt-[23px]">
          <Gauge
            label="Packet/s"
            marks={[
              { t: "0", x: 18, y: 50 },
              { t: "10K", x: 31, y: 31 },
              { t: "50K", x: 50, y: 21 },
              { t: "100K", x: 67, y: 31 },
              { t: "200K", x: 76, y: 50 },
            ]}
          />
        </span>
      </Group>
      <Group label="流量趋势图（位）" className="w-[158px]">
        <span className="pt-[7px]"><Traffic /></span>
      </Group>
      <Group label="数据包缓存 (128.0 MB)" className="w-[266px]">
        <span className="pt-[7px] pr-[3px]"><Buffer /></span>
        <div className="flex flex-col pr-[5px]">
          <Small icon={<ExportIcon />} label="导出" />
          <Small icon={<ClearIcon />} label="清空" />
          <Small icon={<LockIcon />} label="锁定" />
        </div>
      </Group>
    </div>
  );
}

/* ---------- tabs and filter bars ---------- */

function Tab({ label }: { label: string }) {
  return (
    <button
      type="button"
      className="flex h-[26px] items-center rounded-t border border-b-0 border-[#1c4a9e] bg-linear-to-b from-[#e6f1ff] to-[#bdd8ff] px-[5px] whitespace-nowrap text-[#15428b]"
    >
      {label}
    </button>
  );
}

function SlantTab({ label, active, close }: { label: string; active?: boolean; close?: boolean }) {
  const id = active ? "slant-on" : "slant-off";
  return (
    <div className={"z-10 mr-px flex h-[26px] " + (close ? "-ml-5" : "")}>
      <svg width="24" height="26" viewBox="0 0 24 26" className="block shrink-0" aria-hidden="true">
        <defs>
          <linearGradient id={id} x1="0" y1="0" x2="0" y2="1">
            <stop offset="0" stopColor={active ? "#fff0dc" : "#e6f1ff"} />
            <stop offset="1" stopColor={active ? "#ffb65c" : "#bdd8ff"} />
          </linearGradient>
        </defs>
        <path d="M0 26 18 3.500Q21 .5 24 .5V26z" fill={`url(#${id})`} />
        <path d="M0 26 18 3.500Q21 .5 24 .5" fill="none" stroke="#1c4a9e" />
      </svg>
      <div
        className={
          "flex items-center gap-1.5 rounded-tr border-t border-r border-[#1c4a9e] bg-linear-to-b pr-[5px] pl-0.5 whitespace-nowrap text-[#15428b] " +
          (active ? "from-[#fff0dc] to-[#ffb65c] font-bold" : "from-[#e6f1ff] to-[#bdd8ff]")
        }
      >
        <button type="button">{label}</button>
        {close && (
          <button type="button" aria-label="关闭" className="pl-0.5">
            <svg width="8" height="8" viewBox="0 0 8 8" aria-hidden="true">
              <path d="m.5.5 7 7m0-7-7 7" stroke="#15428b" strokeWidth="1.300" />
            </svg>
          </button>
        )}
      </div>
    </div>
  );
}

const BarSep = () => <span className="h-[22px] w-0.5 shrink-0 border-l border-[#9ac6ff] bg-white" />;

function Tool({ label, on, children }: { label: string; on?: boolean; children: ReactNode }) {
  return (
    <button
      type="button"
      aria-label={label}
      className={"flex h-[30px] w-[30px] shrink-0 items-center justify-center " + (on ? "border border-[#ffa030] bg-[#ffc378]" : "")}
    >
      {children}
    </button>
  );
}

function FilterBar({ id, title, count, children }: { id: string; title: string; count: number; children: ReactNode }) {
  return (
    <div className="flex h-[34px] shrink-0 items-center border-b border-[#6f9dd9] bg-linear-to-b from-[#e0edff] to-[#b2d1ff] pr-1">
      {children}
      <label htmlFor={id + "-q"} className="w-[42px] shrink-0 whitespace-nowrap">过滤:</label>
      <div className="ml-0.5 flex h-[29px] w-[404px] border border-[#a4c3ea] bg-white">
        <input id={id + "-q"} type="text" className="min-w-0 flex-1 px-1 outline-none" />
        <button type="button" aria-label="历史" className="flex w-3.5 items-center justify-center bg-linear-to-b from-[#dcebff] to-[#b5d3ff]">
          <Caret />
        </button>
      </div>
      <div className="relative ml-px flex h-[29px] w-[269px] border border-[#a4c3ea] bg-white">
        <select aria-label="范围" className="min-w-0 flex-1 appearance-none bg-transparent pl-px leading-[27px] outline-none">
          <option>全部</option>
        </select>
        <span className="pointer-events-none absolute inset-y-0 right-0 flex w-3.5 items-center justify-center bg-linear-to-b from-[#dcebff] to-[#b5d3ff]">
          <Caret />
        </span>
      </div>
      <input id={id + "-w"} type="checkbox" className="ml-[3px] h-[13px] w-[13px] shrink-0 appearance-none border border-[#5b8ac9] bg-white" />
      <label htmlFor={id + "-w"} className="ml-1.5 whitespace-nowrap">全字匹配</label>
      <button type="button" aria-label="搜索" className="ml-1.5"><Magnifier /></button>
      <span className="flex-1" />
      <BarSep />
      <div className="flex h-[29px] border border-[#2c5aa0]">
        <strong className="flex w-[148px] items-center justify-center border-r border-[#2c5aa0] bg-[#bfdbff] whitespace-nowrap">{title}</strong>
        <span className="flex w-[47px] items-center justify-center bg-white">{count}</span>
      </div>
    </div>
  );
}

/* ---------- tables ---------- */

const RowSel = createContext(false);

function Cell({ children, left }: { children?: ReactNode; left?: boolean }) {
  const sel = useContext(RowSel);
  return (
    <td
      className={
        "h-7 overflow-hidden border-r border-b p-0 whitespace-nowrap " +
        (sel ? "border-[#5a9fd8] " : "border-[#b8c0cc] ") +
        (left ? "text-left" : "pr-1.5 text-right")
      }
    >
      {children}
    </td>
  );
}

function Bar({ value, share, color }: { value: string; share: number; color: string }) {
  const bar: CSSProperties = { backgroundImage: `linear-gradient(${color}, ${color})`, backgroundSize: `max(1px, ${share}%) 100%` };
  const ink: CSSProperties = {
    backgroundImage: `linear-gradient(90deg, #fff ${share}%, ${color} ${share}%)`,
    backgroundClip: "text",
    color: "transparent",
  };
  return (
    <div className="mr-1 ml-[3px] bg-no-repeat" style={bar}>
      <div className="h-[23px] pr-0.5 text-right leading-[23px]" style={ink}>{value}</div>
    </div>
  );
}

function BarCell(p: { value: string; share: number; color: string }) {
  const sel = useContext(RowSel);
  return (
    <td className={"h-7 border-r border-b p-0 whitespace-nowrap " + (sel ? "border-[#5a9fd8]" : "border-[#b8c0cc]")}>
      <Bar {...p} />
    </td>
  );
}

function Head({ children, left, sort }: { children: ReactNode; left?: boolean; sort?: boolean }) {
  return (
    <th className={"h-[30px] border-r border-b border-[#b8c0cc] bg-[#d7e4f2] p-0 font-normal whitespace-nowrap " + (left ? "pl-1.5 text-left" : "pr-1.5 text-right")}>
      <span className="inline-flex items-center gap-2.5">
        {children}
        {sort && <Caret />}
      </span>
    </th>
  );
}

function Row({ sel, color, children }: { sel?: boolean; color?: string; children: ReactNode }) {
  return (
    <RowSel.Provider value={!!sel}>
      <tr className={sel ? "bg-[#d9f1ff]" : "bg-white"} style={{ color }}>
        {children}
      </tr>
    </RowSel.Provider>
  );
}

function VScroll({ thumb, down }: { thumb: string; down?: boolean }) {
  return (
    <div className="flex w-[26px] shrink-0 flex-col bg-[#f0f0f0] px-px">
      <div className="flex h-[26px] shrink-0 items-center justify-center"><Chevron dir="up" /></div>
      <div className={"shrink-0 bg-[#cdcdcd] " + thumb} />
      <span className="flex-1" />
      {down && <div className="flex h-[30px] shrink-0 items-center justify-center"><Chevron dir="down" /></div>}
    </div>
  );
}

function HScroll({ thumb }: { thumb: string }) {
  return (
    <div className="flex h-[25px] shrink-0 bg-[#f0f0f0] pr-7">
      <div className="flex w-[26px] shrink-0 items-center justify-center"><Chevron dir="left" /></div>
      <div className="flex min-w-0 flex-1">
        <div className={"bg-[#cdcdcd] " + thumb} />
      </div>
      <div className="flex w-[26px] shrink-0 items-center justify-center"><Chevron dir="right" /></div>
    </div>
  );
}

type Proto = [string, string, string, string, number, string, string, string, string, string, boolean?];
const PROTOS: Proto[] = [
  ["e", "Ethernet II", "#009900", "4.80 MB", 100, "10,349", "15.240 Kbps", "12", "99.800%", "99.740%", true],
  ["|e", "IP", "#006699", "4.52 MB", 94, "8,996", "8.984 Kbps", "10", "93.888%", "86.700%", true],
  ["||e", "TCP", "#0099cc", "4.04 MB", 84, "5,797", "4.256 Kbps", "6", "83.959%", "55.869%", true],
  ["|||e", "SSL", "#ff9933", "3.70 MB", 77.2, "3,504", "3.328 Kbps", "4", "76.876%", "33.770%", true],
  ["||||L", "HTTPS", "#0033ff", "3.69 MB", 76.8, "3,494", "3.328 Kbps", "4", "76.717%", "33.674%"],
  ["|||e", "HTTP", "#dd00dd", "34.25 KB", 0, "39", "73.248 Kbps", "9", "0.695%", "0.376%", true],
  ["||||e", "RESPONSE", "#cc6600", "28.10 KB", 0, "26", "65.872 Kbps", "7", "0.570%", "0.251%", true],
  ["|||||T", "TEXT", "#cc6600", "12.55 KB", 0, "11", "4.016 Kbps", "2", "0.255%", "0.106%"],
  ["|||||T", "IMAGE", "#cc6600", "5.42 KB", 0, "4", "44.400 Kbps", "4", "0.110%", "0.039%"],
  ["|||||L", "APPLICATION", "#cc6600", "1.36 KB", 0, "2", "11.136 Kbps", "2", "0.028%", "0.019%"],
  ["||||e", "REQUEST", "#006600", "6.15 KB", 0, "13", "7.376 Kbps", "2", "0.125%", "0.125%", true],
];

function ProtocolTable() {
  return (
    <div className="flex h-[341px] shrink-0">
      <div className="min-w-0 flex-1 overflow-hidden bg-white">
        <table className="w-[1590px] table-fixed border-separate border-spacing-0">
          <colgroup>
            <col className="w-[330px]" />
            <col className="w-[270px]" />
            <col className="w-60" />
            <col className="w-[195px]" />
            <col className="w-[195px]" />
            <col className="w-[180px]" />
            <col className="w-[180px]" />
          </colgroup>
          <thead>
            <tr>
              <Head left>名字</Head>
              <Head sort>字节数</Head>
              <Head>数据包</Head>
              <Head>每秒位</Head>
              <Head>每秒数据包</Head>
              <Head>字节%</Head>
              <Head>数据包%</Head>
            </tr>
          </thead>
          <tbody>
            {PROTOS.map((p) => (
              <Row key={p[1]} color={p[2]} sel={p[1] === "TCP"}>
                <Cell left>
                  <span className="flex h-[27px] items-center">
                    <Guides g={p[0]} />
                    <TreeIcon kind="green" kids={p[10]} />
                    <span className="ml-1">{p[1]}</span>
                  </span>
                </Cell>
                <BarCell value={p[3]} share={p[4]} color={p[2]} />
                <Cell>{p[5]}</Cell>
                <Cell>{p[6]}</Cell>
                <Cell>{p[7]}</Cell>
                <Cell>{p[8]}</Cell>
                <Cell>{p[9]}</Cell>
              </Row>
            ))}
          </tbody>
        </table>
      </div>
      <VScroll thumb="h-[57px]" down />
    </div>
  );
}

const CN = () => (
  <Svg w={14} h={12} vb="0 0 14 12">
    <path d="M0 0h14v12H0z" fill="#de2910" />
    <path d="m4 3 .8 1.700 1.700.1-1.300 1.200.5 1.900L4 6.900l-1.700 1 .5-1.900L1.500 4.800l1.700-.1z" fill="#ffde00" />
    <path d="M8 2.500h1M9.500 4.500h1M9.500 7h1M8 9h1" stroke="#ffde00" />
  </Svg>
);
const US = () => (
  <Svg w={14} h={12} vb="0 0 14 12">
    <path d="M0 0h14v12H0z" fill="#fff" />
    <path d="M0 1h14M0 4h14M0 7.500h14M0 11h14" stroke="#c8202f" strokeWidth="1.500" />
    <path d="M0 0h8v7H0z" fill="#2b2f8e" />
  </Svg>
);

type Geo = { flag: "cn" | "us"; a: string; b?: string; w: string };
type Ep = { name: ReactNode; geo?: Geo; ip: string; tcp: string; v: string; share: number; pk: string; sel?: boolean };

const hostName = (text?: string, pad?: string) => (
  <span className="flex h-[27px] items-center">
    <Guides g=" |T" />
    <TreeIcon kind="host" />
    {text && <span className={"text-[#8f9a1c] " + pad}>{text}</span>}
  </span>
);

const ENDPOINTS: Ep[] = [
  {
    name: (
      <span className="flex h-[27px] items-center">
        <Guides g="E" />
        <TreeIcon kind="localnet" kids />
        <span className="ml-1">本地网段</span>
      </span>
    ),
    ip: "69", tcp: "179", v: "8.08 MB", share: 100, pk: "11,594", sel: true,
  },
  {
    name: (
      <span className="flex h-[27px] items-center">
        <Guides g=" e" />
        <span className="ml-auto pr-2">HNOLOGIES CO...</span>
      </span>
    ),
    ip: "55", tcp: "147", v: "3.95 MB", share: 81.8, pk: "5,680",
  },
  { name: hostName(), geo: { flag: "cn", a: "中国", b: "Google/电信", w: "w-[187px]" }, ip: "1", tcp: "2", v: "0.00 B", share: 0, pk: "0" },
  { name: hostName(), geo: { flag: "us", a: "美国", w: "w-[156px]" }, ip: "1", tcp: "1", v: "0.00 B", share: 0, pk: "0" },
  { name: hostName("com", "ml-auto pr-10"), geo: { flag: "cn", a: "中国,新", b: "木齐,电信", w: "w-[193px]" }, ip: "1", tcp: "1", v: "0.00 B", share: 0, pk: "0" },
  { name: hostName("c", "pl-1"), geo: { flag: "cn", a: "中国,广", b: ",电信", w: "w-[157px]" }, ip: "1", tcp: "34", v: "0.00 B", share: 0, pk: "0" },
  { name: hostName(), geo: { flag: "cn", a: "中国", b: ",电信", w: "w-[157px]" }, ip: "1", tcp: "2", v: "0.00 B", share: 0, pk: "0" },
  { name: hostName(), geo: { flag: "cn", a: "中国", w: "w-[157px]" }, ip: "1", tcp: "1", v: "0.00 B", share: 0, pk: "0" },
];

/* Pixelated privacy strokes laid over the address columns. */
function Mosaic() {
  const tiles: [number, number, number, number, string][] = [
    [60, 420, 740, 84, "#e4e5e7"], [80, 420, 60, 84, "#ececef"], [131, 420, 47, 30, "#c3e1cd"], [131, 450, 47, 54, "#dae8d5"],
    [178, 420, 94, 30, "#cfd7df"], [272, 420, 94, 30, "#dbe2ea"], [319, 420, 47, 30, "#cdd3dc"], [366, 420, 47, 30, "#dfe5e8"],
    [413, 420, 94, 30, "#d5dade"], [272, 450, 47, 54, "#d8d8da"], [366, 450, 47, 54, "#f0f0ee"], [413, 450, 94, 54, "#dfdfe0"],
    [507, 450, 141, 54, "#d8dadd"], [648, 450, 94, 54, "#e0e0e0"],
    [60, 504, 740, 54, "#fafafa"], [131, 504, 47, 250, "#eef0f3"], [178, 504, 47, 54, "#a4bfd1"], [225, 504, 94, 54, "#c9c8c8"],
    [319, 504, 47, 54, "#cfcfcf"], [366, 504, 47, 54, "#c3c3c3"], [413, 504, 47, 54, "#c8c8c8"], [460, 504, 94, 54, "#d0d2d5"],
    [60, 558, 740, 108, "#fbfbfb"], [131, 558, 47, 108, "#eaedf0"], [178, 558, 47, 54, "#c6d5df"], [225, 558, 329, 54, "#e8e8ea"],
    [178, 612, 47, 54, "#c4d2d6"], [225, 612, 94, 54, "#dfdfe1"], [319, 612, 188, 54, "#d8d8d8"], [507, 612, 47, 54, "#dededf"],
    [178, 666, 47, 54, "#abc2d2"], [225, 666, 329, 54, "#e6e8d3"], [272, 666, 47, 54, "#dfe4cf"], [554, 666, 188, 54, "#eaecdd"],
    [178, 720, 47, 54, "#dce3ea"], [225, 720, 329, 54, "#f2f3f0"], [554, 720, 188, 54, "#fafaf8"],
    [200, 774, 25, 110, "#a9c6d2"], [225, 774, 376, 54, "#d2e7dc"], [366, 774, 47, 54, "#c4e2d1"], [601, 774, 130, 54, "#fdfdfd"],
    [225, 828, 329, 54, "#efdde6"], [366, 828, 47, 54, "#f4e7ed"], [507, 828, 47, 54, "#ecd8e3"], [554, 828, 177, 108, "#fdfdfd"],
    [200, 882, 354, 54, "#f4ecf1"],
    [1020, 410, 180, 40, "#edf5fc"], [1020, 450, 180, 54, "#fcfcfc"], [1020, 504, 50, 54, "#c8cacc"], [1070, 504, 47, 54, "#d0d0d0"],
    [1117, 504, 83, 54, "#cbcbcb"], [1020, 558, 200, 54, "#f4f5f6"], [1020, 558, 50, 108, "#e3e7ea"], [1070, 612, 190, 54, "#fafafa"],
    [1050, 666, 70, 54, "#c3bfc1"], [1120, 666, 47, 54, "#cbcbcc"], [1167, 666, 47, 54, "#c4c4c6"], [1214, 666, 60, 54, "#b0b1b5"],
    [1060, 720, 210, 54, "#dfe0e1"], [1010, 774, 60, 54, "#cdd0d1"], [1070, 774, 50, 54, "#e7e7e7"], [1120, 774, 47, 54, "#cfcfcf"],
    [1167, 774, 100, 54, "#c5c5c5"], [1010, 828, 60, 54, "#d3d5d6"], [1070, 828, 97, 54, "#d0cdcf"], [1167, 828, 47, 54, "#c7c5c4"],
    [1214, 828, 60, 54, "#d0d0d0"], [1010, 882, 260, 54, "#dfe0e1"],
  ];
  return (
    <svg className="pointer-events-none absolute top-0 left-0" width="490" height="204" viewBox="18 324 1281 612" preserveAspectRatio="none" aria-hidden="true">
      <clipPath id="strokes">
        <path d="M68 490C75 440 110 422 150 422L420 420C510 422 530 465 610 472C680 480 780 445 790 510C812 570 790 660 690 655Q730 690 728 770L728 936H550Q510 885 480 888C430 890 440 936 360 936H290Q210 930 209 850C209 800 230 770 280 756Q200 755 160 720C120 680 125 630 150 596Q70 590 82 560Z" />
        <path d="M1030 470C1040 430 1075 414 1107 414C1160 414 1185 450 1185 500L1185 550C1190 590 1240 610 1250 680C1270 760 1275 830 1255 860C1230 910 1190 936 1150 936H1080C1030 925 1015 880 1018 840C1020 790 1050 770 1102 764C1095 700 1060 690 1045 640C1020 590 1025 510 1030 470Z" />
      </clipPath>
      <g clipPath="url(#strokes)">
        {tiles.map(([x, y, w, h, c], i) => (
          <rect key={i} x={x} y={y} width={w} height={h} fill={c} />
        ))}
      </g>
    </svg>
  );
}

function EndpointTable() {
  return (
    <div className="flex min-h-0 flex-1">
      <div className="min-w-0 flex-1 overflow-hidden bg-white">
        <div className="relative">
          <table className="w-full table-fixed border-separate border-spacing-0">
            <colgroup>
              <col className="w-[330px]" />
              <col className="w-[225px]" />
              <col className="w-[150px]" />
              <col className="w-[150px]" />
              <col className="w-[150px]" />
              <col className="w-[270px]" />
              <col />
            </colgroup>
            <thead>
              <tr>
                <Head left>名字</Head>
                <Head left>地理位置</Head>
                <Head>IP会话</Head>
                <Head>TCP会话</Head>
                <Head>UDP会话</Head>
                <Head sort>字节数</Head>
                <Head>数据包</Head>
              </tr>
            </thead>
            <tbody>
              {ENDPOINTS.map((e, i) => (
                <Row key={i} sel={e.sel}>
                  <Cell left>{e.name}</Cell>
                  <Cell left>
                    {e.geo && (
                      <span className="flex items-center gap-[5px] pl-1.5">
                        {e.geo.flag === "cn" ? <CN /> : <US />}
                        <span className={"flex justify-between " + e.geo.w}>
                          <span>{e.geo.a}</span>
                          <span>{e.geo.b}</span>
                        </span>
                      </span>
                    )}
                  </Cell>
                  <Cell>{e.ip}</Cell>
                  <Cell>{e.tcp}</Cell>
                  <Cell>0</Cell>
                  <BarCell value={e.v} share={e.share} color="#0066cc" />
                  <Cell>{e.pk}</Cell>
                </Row>
              ))}
            </tbody>
          </table>
          <div className="absolute top-[30px] left-0">
            <Mosaic />
          </div>
        </div>
      </div>
      <VScroll thumb="h-[26px]" />
    </div>
  );
}

/* ---------- page ---------- */

const TABS = ["物理端点", "IP端点", "物理会话", "IP会话", "TCP会话", "UDP会话", "服务", "端口", "VoIP呼叫", "进程", "应用", "矩阵", "数据包", "日志", "报表"];

function TitleBar() {
  return (
    <header className="relative flex h-[37px] shrink-0 items-center bg-white">
      <div className="flex h-[35px] w-[255px] items-start justify-end gap-2 self-start">
        <div className="relative flex h-[35px] w-[203px] items-center gap-[9px] rounded-br-[20px] rounded-bl-[3px] border-r-2 border-b-2 border-[#c3c3c6] bg-[#fafafa] pb-1 pl-4">
          <svg className="absolute top-0 left-0" width="10" height="34" viewBox="0 0 10 34" aria-hidden="true">
            <path d="M0 0v34h8Q9 15 1 0z" fill="#fff" />
            <path d="M1 0q8 15 7 34" fill="none" stroke="#bbb" strokeWidth="1.500" />
          </svg>
          <button type="button" aria-label="新建"><DocIcon /></button>
          <button type="button" aria-label="计划"><ClipClock /></button>
          <button type="button" aria-label="打开"><FolderBack /></button>
          <button type="button" aria-label="保存"><Svg w={26} vb="0 0 24 24"><Disk /></Svg></button>
          <button type="button" aria-label="选项"><OptionsIcon /></button>
        </div>
      </div>
      <h1 className="mt-0.5 min-w-0 flex-1 text-center text-[19px] text-black">分析工程 1 - 科来网络分析系统 2020 技术交流版</h1>
      <div className="flex w-[276px] shrink-0 items-center justify-end pr-7">
        <button type="button" aria-label="最小化" className="mr-[54px]">
          <svg width="16" height="16" viewBox="0 0 16 16"><path d="M0 8.500h16" stroke="#000" /></svg>
        </button>
        <button type="button" aria-label="还原" className="mr-[55px]">
          <svg width="16" height="16" viewBox="0 0 16 16"><path d="M.5 3.500h11v12H.5zM3.500 3.500v-3h12v12h-4" fill="none" stroke="#000" /></svg>
        </button>
        <button type="button" aria-label="关闭">
          <svg width="16" height="16" viewBox="0 0 16 16"><path d="m.5.5 15 15m0-15-15 15" stroke="#000" strokeWidth="1.200" /></svg>
        </button>
      </div>
      <button type="button" aria-label="主菜单" className="absolute top-3.5 -left-1.5 z-20">
        <svg width="47" height="47" viewBox="0 0 47 47">
          <circle cx="23.500" cy="23.500" r="22.500" fill="url(#rim)" stroke="#7c8798" />
          <circle cx="23.500" cy="23.500" r="16.500" fill="url(#orb)" />
          <path d="M8 23c5 0 5-9 16-9 9 0 10 5 10 8 2 3 4 2 5 1-1 6-6 8-9 6-3 4-12 4-16-1 4 2 10 3 14 0-7 2-12-1-12-4-3-1-5 1-8-1z" fill="#fff" />
          <path d="M17 22q3-5 9-4 5 1 5 5-2-3-7-3t-7 2z" fill="#2f6da8" />
        </svg>
      </button>
    </header>
  );
}

function MenuBar() {
  return (
    <nav className="flex h-[39px] shrink-0 items-end bg-[#bfdbff] pl-[60px] text-[#15428b]">
      <a href="#analysis" className="z-10 -mb-px flex h-[39px] w-[60px] items-center justify-center rounded-t border border-b-0 border-[#8db2e3] bg-linear-to-b from-[#f7fbff] to-[#e0ebf8] pt-0.5 ring-1 ring-[#c9f3ff]">分析</a>
      <a href="#system" className="flex h-[39px] w-[70px] items-center justify-center pt-0.5">系统</a>
      <a href="#tools" className="flex h-[39px] w-[60px] items-center justify-center pt-0.5">工具</a>
      <a href="#view" className="flex h-[39px] w-[70px] items-center justify-center pt-0.5">视图</a>
      <button type="button" className="ml-auto flex h-[39px] items-center gap-0.5 pr-1">
        <Svg w={32} vb="0 0 32 32">
          <circle cx="16" cy="16" r="15" fill="#d4d9e0" stroke="#8a929c" />
          <circle cx="16" cy="16" r="12.500" fill="url(#ball)" />
          <path d="M11 12q0-5 5-5t5 4.500q0 3-3 4.500-1.500 1-1.500 3" fill="none" stroke="#fff" strokeWidth="3" />
          <circle cx="16.300" cy="23.500" r="1.900" fill="#fff" />
        </Svg>
        帮助
        <Caret color="#5b7fb5" />
      </button>
    </nav>
  );
}

export default function App() {
  return (
    <div className="relative flex h-screen flex-col overflow-hidden bg-[#abc8f3] font-['Noto_Sans','Noto_Sans_CJK_SC',sans-serif] text-[18px] leading-[26px] text-black">
      <Defs />
      <TitleBar />
      <MenuBar />
      <Ribbon />
      <main className="flex min-h-0 flex-1 pt-[5px]">
        <Sidebar />
        <div className="w-1 shrink-0 bg-linear-to-b from-[#9fc0f0] to-[#6a94d4]" />
        <div className="flex min-w-0 flex-1 flex-col">
          <div className="flex h-[30px] shrink-0 items-end border-b border-[#2c5aa0] bg-[#bfdbff] pl-2">
            <SlantTab label="我的图表" />
            <Tab label="概要" />
            <Tab label="诊断" />
            <SlantTab label="协议" active close />
            {TABS.map((t) => (
              <Tab key={t} label={t} />
            ))}
            <button type="button" aria-label="窗口" className="mr-1 mb-1.5 ml-auto">
              <Svg w={18} h={20} vb="0 0 18 20">
                <rect x=".5" y=".5" width="17" height="19" rx="2" fill="#dce9f8" stroke="#7791b5" />
                <path d="M3 4h12v13H3z" fill="#fff" stroke="#55698a" />
                <path d="M5 7h8M10 10h3M10 13h3" stroke="#55698a" />
                <path d="M5 10h4v4H5z" fill="#f0a92f" />
              </Svg>
            </button>
          </div>
          <div className="flex min-h-0 flex-1 border-l border-[#2c5aa0]">
            <div className="flex min-w-0 flex-1 flex-col border-t border-l border-[#ffb65c]">
              <FilterBar id="proto" title="实时分析\协议:" count={56}>
                <span className="flex w-[186px] shrink-0 items-center pl-1">
                  <Tool label="保存"><SaveIcon /></Tool>
                  <span className="w-0.5" />
                  <BarSep />
                  <span className="w-0.5" />
                  <Tool label="查找" on><CalcSearch /></Tool>
                  <Tool label="过滤器"><FunnelPlus /></Tool>
                  <Tool label="定位"><TreeCursor /></Tool>
                  <span className="flex-1" />
                  <BarSep />
                  <Tool label="刷新"><Refresh /></Tool>
                  <button type="button" aria-label="刷新选项" className="mr-0.5 px-0.5"><Caret /></button>
                  <span className="w-1" />
                </span>
              </FilterBar>
              <ProtocolTable />
              <HScroll thumb="w-[1020px]" />
              <div className="h-1 shrink-0 border-y border-[#5f5f5f] bg-[#f0f0f0]" />
              <div className="flex min-h-0 flex-1 flex-col">
                <div className="flex h-[31px] shrink-0 items-end border-b border-[#2c5aa0] bg-[#bfdbff] pl-2">
                  <SlantTab label="物理端点" active />
                  <Tab label="IP端点" />
                  <Tab label="日志" />
                  <span className="mb-2.5 ml-auto flex gap-1.5 pr-1">
                    <svg width="6" height="11" viewBox="0 0 6 11" aria-hidden="true"><path d="M5.500 1v9L1 5.500z" fill="none" stroke="#15428b" /></svg>
                    <svg width="6" height="11" viewBox="0 0 6 11" aria-hidden="true"><path d="M.5 1v9L5 5.500z" fill="none" stroke="#15428b" /></svg>
                  </span>
                </div>
                <div className="flex min-h-0 flex-1 flex-col border-t border-r-2 border-l-2 border-[#ffb65c] border-r-[#f0f0f0]">
                  <FilterBar id="ep" title="TCP\物理端点:" count={89}>
                    <span className="flex w-[251px] shrink-0 items-center pl-1">
                      <Tool label="关联" on><LinkDoc /></Tool>
                      <span className="w-[3px]" />
                      <BarSep />
                      <span className="w-0.5" />
                      <Tool label="保存"><SaveIcon /></Tool>
                      <span className="w-0.5" />
                      <BarSep />
                      <span className="w-0.5" />
                      <Tool label="过滤器"><FunnelPlus off /></Tool>
                      <Tool label="表格"><TablePlus /></Tool>
                      <Tool label="定位"><TreeCursor off /></Tool>
                      <Tool label="层次" on><TreeBoxes /></Tool>
                      <span className="flex-1" />
                      <BarSep />
                      <Tool label="刷新"><Refresh /></Tool>
                      <button type="button" aria-label="刷新选项" className="mr-0.5 px-0.5"><Caret /></button>
                      <span className="w-1" />
                    </span>
                  </FilterBar>
                  <EndpointTable />
                  <div className="h-[13px] shrink-0 overflow-hidden">
                    <HScroll thumb="w-[783px]" />
                  </div>
                </div>
              </div>
            </div>
            <div className="w-1 shrink-0 border-l-2 border-[#d09a50] bg-[#6a94d4]" />
          </div>
        </div>
      </main>

      <div className="absolute right-[14px] bottom-0 z-20 h-[52px] w-[180px]">
        <div className="absolute right-9 bottom-0 flex h-9 w-[143px] items-start rounded-tl-[32px] bg-[#32363f] pt-0.5 pl-4 shadow-lg">
          <svg width="12" height="12" viewBox="0 0 12 12" className="mt-1.5" aria-hidden="true">
            <path d="m1 6 5-5 5 5M6 1.500V11" fill="none" stroke="#4fb3f0" strokeWidth="2.500" />
          </svg>
          <strong className="ml-[21px] text-[#f2f2f2]">0</strong>
          <span className="text-base text-[#9a9da4]">K/s</span>
        </div>
        <svg className="absolute right-0 bottom-0" width="90" height="51" viewBox="0 0 90 51" aria-hidden="true">
          <circle cx="45" cy="45" r="44" fill="#535868" fillOpacity=".94" stroke="#7b7f8a" />
          <path d="M45 7a38 38 0 0 1 38 44" fill="none" stroke="#4fd6b4" strokeWidth="3" />
          <text x="39" y="57" fontSize="37" fontWeight="300" fill="#d8dae0" textAnchor="middle" fontFamily="Open Sans">50</text>
          <text x="67" y="58" fontSize="15" fill="#d8dae0" textAnchor="middle" fontFamily="Open Sans">%</text>
        </svg>
      </div>
    </div>
  );
}
